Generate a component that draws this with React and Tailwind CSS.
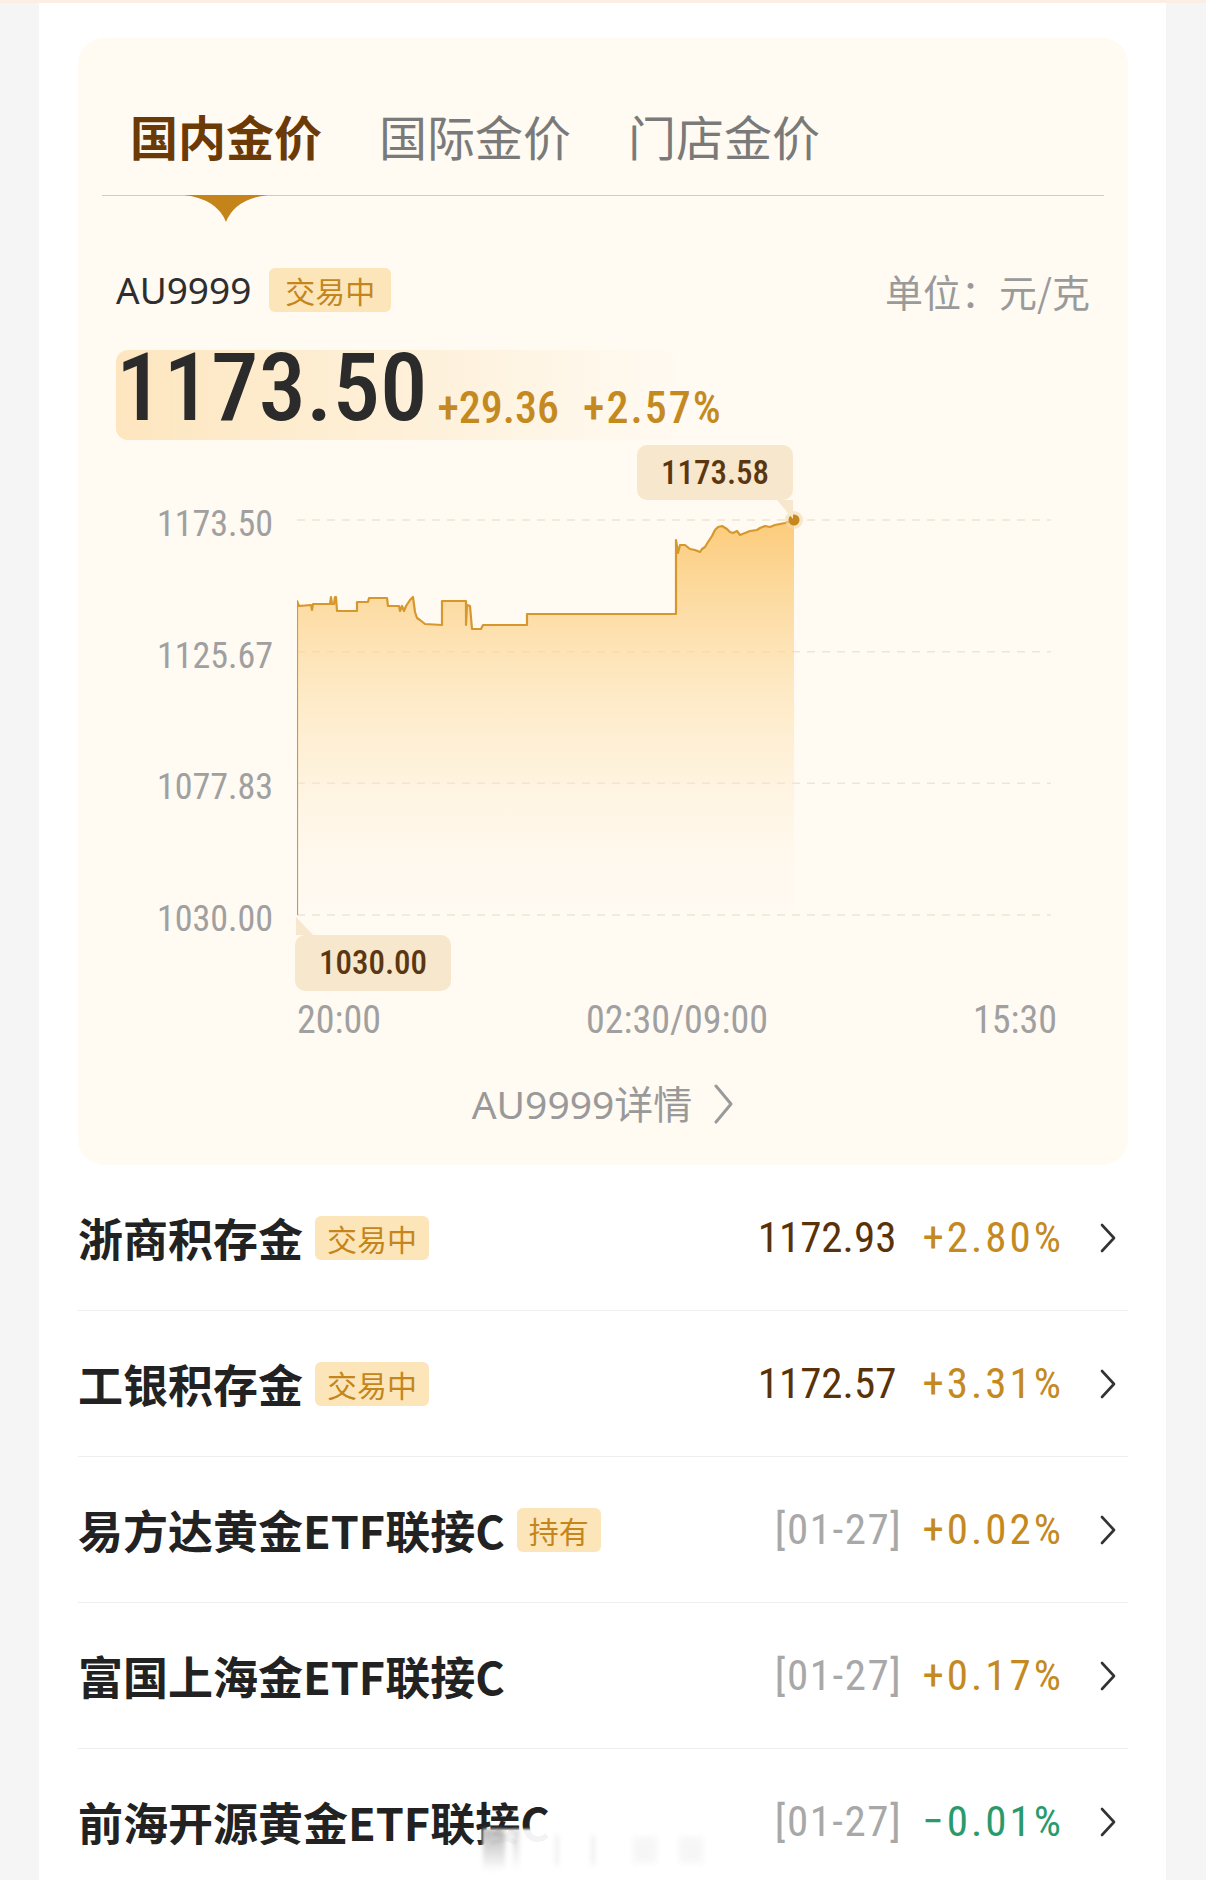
import React from 'react';

const NUM = "font-['Roboto_Condensed','DejaVu_Sans_Condensed',Roboto,sans-serif]";
const CJK = "font-['Noto_Sans','Noto_Sans_CJK_SC',sans-serif]";

// line points in page pixels, shifted into the svg box below
const raw = [
  [297, 915], [297, 601], [299, 606], [311, 605], [312, 610], [313, 604], [330, 604], [331, 597],
  [332, 604], [334, 604], [335, 597], [336, 597], [337, 611], [357, 611], [357, 602], [368, 602],
  [369, 598], [387, 598], [388, 606], [399, 606], [400, 611], [402, 606], [404, 611], [406, 606],
  [410, 600], [413, 597], [415, 612], [417, 618], [420, 620], [425, 624], [442, 625], [442, 601],
  [466, 601], [466, 625], [467, 605], [470, 606], [472, 629], [481, 629], [483, 625], [527, 625],
  [527, 614], [676, 614], [676, 540], [678, 553], [680, 545], [685, 545], [690, 549], [695, 550],
  [700, 552], [702, 549], [705, 547], [708, 542], [712, 536], [715, 530], [718, 527], [722, 526],
  [727, 529], [730, 532], [733, 533], [737, 531], [740, 535], [745, 533], [750, 531], [757, 530],
  [760, 528], [765, 526], [770, 527], [775, 525], [780, 524], [785, 523], [788, 522], [794, 520],
];
const pts = raw.map(([x, y]) => [x - 297, y - 480]);
const linePath = pts.map(([x, y], i) => `${i ? 'L' : 'M'}${x} ${y}`).join(' ');
const areaPath = `${linePath} L497 435 L0 435 Z`;
const gridY = [40, 171.67, 303.33, 435];

const rows = [
  { name: '浙商积存金', badge: '交易中', price: '1172.93', pct: '+2.80%' },
  { name: '工银积存金', badge: '交易中', price: '1172.57', pct: '+3.31%' },
  { name: '易方达黄金ETF联接C', badge: '持有', date: '[01-27]', pct: '+0.02%' },
  { name: '富国上海金ETF联接C', date: '[01-27]', pct: '+0.17%' },
  { name: '前海开源黄金ETF联接C', date: '[01-27]', pct: '−0.01%', down: true },
];

function Chevron({ color = '#333', w = 17, h = 30, sw = 2.6 }) {
  return (
    <svg width={w} height={h} viewBox={`0 0 ${w} ${h}`} fill="none">
      <path d={`M2 2 L${w - 3} ${h / 2} L2 ${h - 2}`} stroke={color} strokeWidth={sw} strokeLinecap="round" strokeLinejoin="round" />
    </svg>
  );
}

function Badge({ children, wide }) {
  return (
    <span className={`h-[44px] ${wide ? 'px-[16px]' : 'px-[12px]'} rounded-[6px] bg-[#fde5ba] text-[#c4861c] text-[30px] leading-[44px] font-['Noto_Sans_CJK_SC',sans-serif]`}>
      {children}
    </span>
  );
}

function Chart() {
  return (
    <div className="mt-[40px] flex">
      <div className={`w-[157px] flex flex-col items-end pt-[26px] gap-[95.67px] text-[36px] leading-[36px] text-[#a0a0a0] ${NUM}`}>
        <span>1173.50</span>
        <span>1125.67</span>
        <span>1077.83</span>
        <span>1030.00</span>
      </div>
      <div className="relative ml-[24px] w-[754px] h-[470px]">
        <svg width="754" height="470" className="block">
          <defs>
            <linearGradient id="fill" x1="0" y1="40" x2="0" y2="435" gradientUnits="userSpaceOnUse">
              <stop offset="0" stopColor="#fbc365" stopOpacity="0.85" />
              <stop offset="0.5" stopColor="#fddfa8" stopOpacity="0.5" />
              <stop offset="1" stopColor="#fff3dc" stopOpacity="0" />
            </linearGradient>
          </defs>
          {gridY.map((y) => (
            <line key={y} x1="0" x2="754" y1={y} y2={y} stroke="#efe5d5" strokeWidth="1.5" strokeDasharray="8 7" />
          ))}
          <path d={areaPath} fill="url(#fill)" />
          <path d={linePath} fill="none" stroke="#d6982c" strokeWidth="2.2" strokeLinejoin="round" />
          <circle cx="497" cy="40" r="9" fill="#f3d9ae" opacity="0.6" />
          <circle cx="497" cy="40" r="5.5" fill="#c6881c" />
        </svg>

        <div className={`absolute left-[340px] top-[-35px] w-[156px] h-[55px] rounded-[10px] bg-[#f7e7cd] flex items-center justify-center text-[33px] font-medium text-[#5b3711] ${NUM}`}>
          1173.58
        </div>
        <svg className="absolute left-[480px] top-[20px]" width="17" height="19">
          <polygon points="0,0 16,0 16,19" fill="#f7e7cd" />
        </svg>

        <div className={`absolute left-[-2px] top-[455px] w-[156px] h-[56px] rounded-[10px] bg-[#f7e7cd] flex items-center justify-center text-[33px] font-medium text-[#5b3711] ${NUM}`}>
          1030.00
        </div>
        <svg className="absolute left-[-1px] top-[437px]" width="18" height="18">
          <polygon points="0,0 0,18 17,18" fill="#f7e7cd" />
        </svg>
      </div>
    </div>
  );
}

export default function App() {
  return (
    <div className="w-[1206px] h-[1880px] overflow-hidden bg-[#f5f5f5]">
      <div className="h-[3px] bg-[#fbeee4]" />
      <div className="relative ml-[39px] mr-[40px] h-[1877px] bg-white pl-[39px] pr-[38px] pt-[35px]">
        {/* gold price card */}
        <div className="rounded-[26px] bg-[#fffaf2] pt-[67px] pb-[41px]">
          <div className="relative mx-[24px] h-[91px] border-b border-[#e3cb9c] pl-[28px] flex gap-[57px] text-[48px] leading-[60px] font-['Noto_Sans_CJK_SC',sans-serif]">
            <span className="font-bold text-[#6b3a07]">国内金价</span>
            <span className="text-[#7a7a7a]">国际金价</span>
            <span className="text-[#7a7a7a]">门店金价</span>
            <svg className="absolute left-[82px] top-[90px]" width="84" height="28" viewBox="0 0 84 28">
              <path d="M0 0 L84 0 Q51 4 42 27 Q33 4 0 0 Z" fill="#c4841a" />
            </svg>
          </div>

          <div className="px-[38px]">
            <div className="mt-[72px] h-[44px] flex items-center">
              <span className={`text-[37px] text-[#2e2e2e] ${CJK}`}>AU9999</span>
              <span className="ml-[18px] flex"><Badge wide>交易中</Badge></span>
              <span className="ml-auto text-[38px] text-[#9a9a9a] font-['Noto_Sans_CJK_SC',sans-serif]">单位：元/克</span>
            </div>

            <div className="mt-[38px] h-[90px] w-[562px] rounded-[12px] bg-gradient-to-r from-[#fde6bf] via-[#fef0d8] to-[#fffaf2] flex items-end pb-[4px]">
              <span className={`text-[95px] leading-[96px] font-medium text-[#2b2b2b] ${NUM}`}>1173.50</span>
              <span className={`ml-[10px] mb-[6px] text-[44px] leading-[44px] font-medium text-[#c48a1f] ${NUM}`}>+29.36</span>
              <span className={`ml-[24px] mb-[6px] text-[44px] leading-[44px] tracking-[2px] font-medium text-[#c48a1f] ${NUM}`}>+2.57%</span>
            </div>
          </div>

          <div className="px-[38px]">
            <Chart />
            <div className={`mt-[53px] ml-[181px] w-[760px] flex justify-between text-[38px] leading-[34px] text-[#a0a0a0] ${NUM}`}>
              <span>20:00</span>
              <span>02:30/09:00</span>
              <span>15:30</span>
            </div>
          </div>

          <div className={`mt-[47px] h-[40px] flex justify-center items-center text-[39px] leading-[40px] text-[#999] ${CJK}`}>
            <span>AU9999详情</span>
            <span className="ml-[22px] flex"><Chevron color="#9a9a9a" w={20} h={40} sw={3} /></span>
          </div>
        </div>

        {/* fund list */}
        <div>
          {rows.map((r) => (
            <div key={r.name} className="h-[146px] border-b border-[#eeeeee] flex items-center pr-[11px]">
              <span className="text-[45px] font-bold text-[#222] font-['Noto_Sans_CJK_SC',sans-serif]">{r.name}</span>
              {r.badge && <span className="ml-[12px] flex"><Badge>{r.badge}</Badge></span>}
              <div className="ml-auto flex items-center">
                {r.price && <span className={`mr-[26px] text-[43px] text-[#5a3209] ${NUM}`}>{r.price}</span>}
                {r.date && <span className={`mr-[20px] text-[43px] tracking-[1.5px] text-[#a8a8a8] ${NUM}`}>{r.date}</span>}
                <span className={`text-[43px] tracking-[3px] ${r.down ? 'text-[#2a9a6c]' : 'text-[#c48a1f]'} ${NUM}`}>{r.pct}</span>
                <span className="ml-[36px] flex"><Chevron /></span>
              </div>
            </div>
          ))}
        </div>

        {/* watermark smear */}
        <div className="absolute left-[444px] top-[1826px] w-[240px] h-[42px] bg-white/95 blur-[1px]">
          <div className="absolute left-0 top-0 w-[22px] h-[42px] bg-gradient-to-b from-[#8a8a8a] to-white opacity-60 blur-[2px]" />
          <div className="absolute left-[30px] top-0 w-[6px] h-[42px] bg-gradient-to-b from-[#aaa] to-white opacity-50 blur-[2px]" />
          <div className="absolute left-[72px] top-[6px] w-[4px] h-[30px] bg-[#e4e4e4] opacity-50 blur-[2px]" />
          <div className="absolute left-[108px] top-[6px] w-[4px] h-[30px] bg-[#e4e4e4] opacity-50 blur-[2px]" />
          <div className="absolute left-[150px] top-[8px] w-[24px] h-[26px] bg-[#eeeeee] opacity-50 blur-[3px]" />
          <div className="absolute left-[196px] top-[8px] w-[24px] h-[26px] bg-[#eeeeee] opacity-50 blur-[3px]" />
        </div>
      </div>
    </div>
  );
}
